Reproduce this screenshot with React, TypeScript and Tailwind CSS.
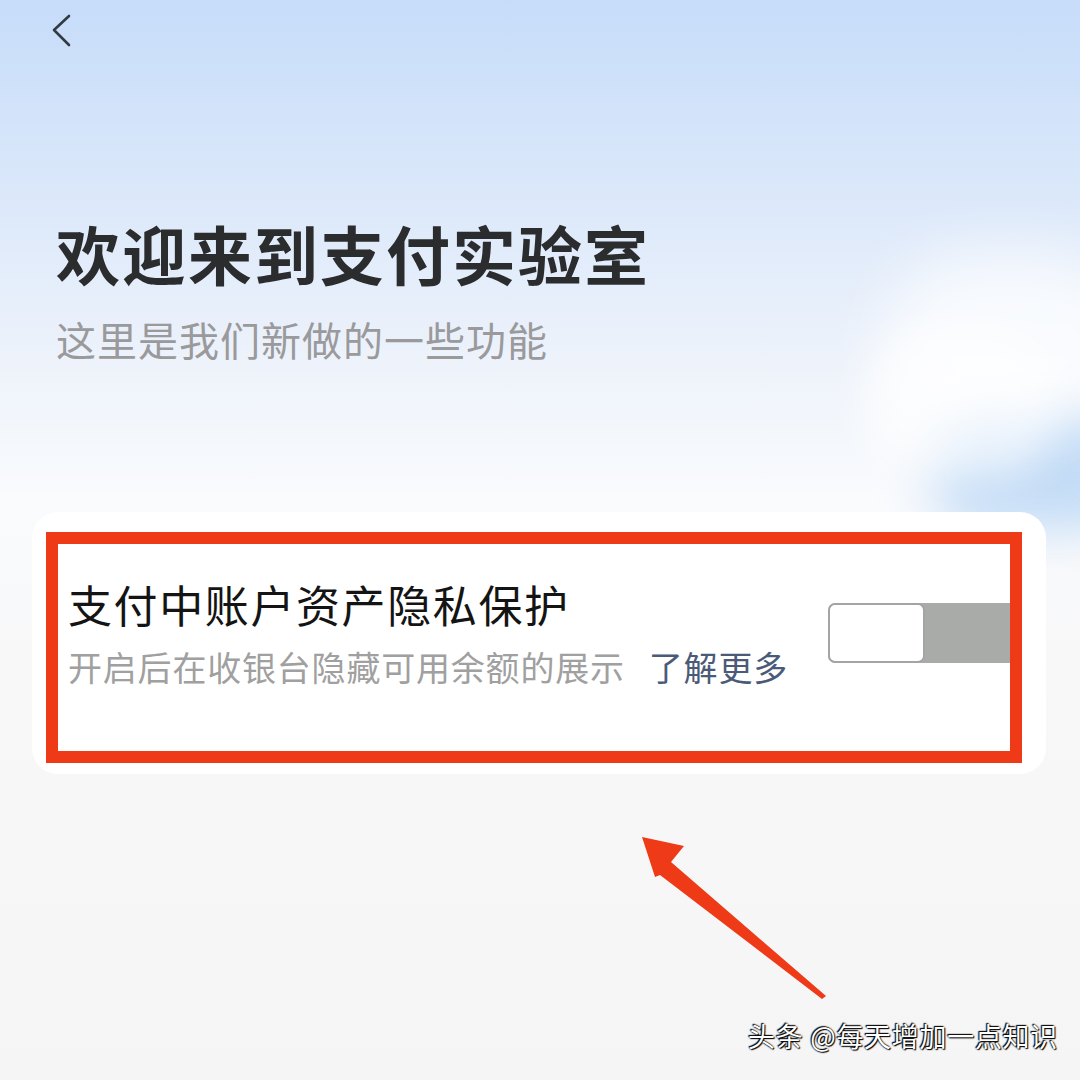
import React from 'react';

const cjk = "font-['Noto_Sans_CJK_SC','Noto_Sans',sans-serif]";

function BackIcon() {
  return (
    <svg width="24" height="36" viewBox="0 0 24 36" fill="none">
      <polyline points="18,2 3,16 18,31" stroke="#333a44" strokeWidth="2.6" strokeLinecap="round" strokeLinejoin="round" />
    </svg>
  );
}

function Toggle() {
  return (
    <div className="flex h-[60px] w-[192px] overflow-hidden rounded-[7px] bg-[#a9aba8]">
      <div className="h-full w-[97px] rounded-[7px] border-2 border-[#a3a5a4] bg-white" />
    </div>
  );
}

function Arrow() {
  // annotation arrow drawn on top of the screenshot
  return (
    <svg className="pointer-events-none absolute left-0 top-0" width="1080" height="1080" viewBox="0 0 1080 1080">
      <polygon points="642,837 684,846 671,862 826,996 822,999 660,875 655,877" fill="#ee3a16" />
    </svg>
  );
}

export default function App() {
  return (
    <div
      className={`relative h-[1080px] w-[1080px] overflow-hidden bg-[linear-gradient(180deg,#c6dcf9_0%,#dbe8fa_18%,#eef3fb_34%,#f9fbfd_46%,#f8f8f9_60%,#f5f5f6_100%)] ${cjk}`}
    >
      {/* cloud on the right */}
      <div className="absolute left-[880px] top-[250px] h-[200px] w-[260px] rounded-full bg-white/70 blur-[30px]" />
      <div className="absolute left-[930px] top-[420px] h-[110px] w-[220px] rounded-full bg-[#c4dcf6] blur-[24px]" />
      <div className="absolute left-[860px] top-[330px] h-[150px] w-[200px] rounded-full bg-white/60 blur-[20px]" />

      <div className="relative flex flex-col">
        {/* Header */}
        <div className="pl-[51px] pt-[14px]">
          <BackIcon />
        </div>

        {/* Title */}
        <div className="flex flex-col gap-[35px] pl-[56px] pt-[170px]">
          <h1 className="text-[64px] font-bold leading-none tracking-[2px] text-[#2b2c2e]">欢迎来到支付实验室</h1>
          <p className="text-[40px] leading-none tracking-[1px] text-[#9a9a9c]">这里是我们新做的一些功能</p>
        </div>

        {/* Card */}
        <div className="ml-[32px] mt-[153px] flex h-[262px] w-[1014px] items-start rounded-[26px] bg-white pr-[26px]">
          <div className="flex flex-1 flex-col gap-[24px] pl-[36px] pt-[70px]">
            <div className="text-[44px] leading-none tracking-[1.6px] text-[#141414]">支付中账户资产隐私保护</div>
            <div className="text-[34px] leading-none tracking-[0.8px] text-[#a0a0a0]">
              开启后在收银台隐藏可用余额的展示
              <span className="ml-[24px] text-[#4b5a78]">了解更多</span>
            </div>
          </div>
          <div className="mt-[91px] shrink-0">
            <Toggle />
          </div>
        </div>
      </div>

      {/* red annotation box */}
      <div className="absolute left-[46px] top-[532px] h-[231px] w-[976px] border-[12px] border-[#ee3a16]" />

      <Arrow />

      {/* watermark */}
      <div className="absolute left-[748px] top-[1022px] text-[27px] leading-none tracking-[0.7px] text-white [text-shadow:0_0_2px_#000,1px_1px_1px_#000,-1px_-1px_1px_#000]">
        头条 @每天增加一点知识
      </div>
    </div>
  );
}
